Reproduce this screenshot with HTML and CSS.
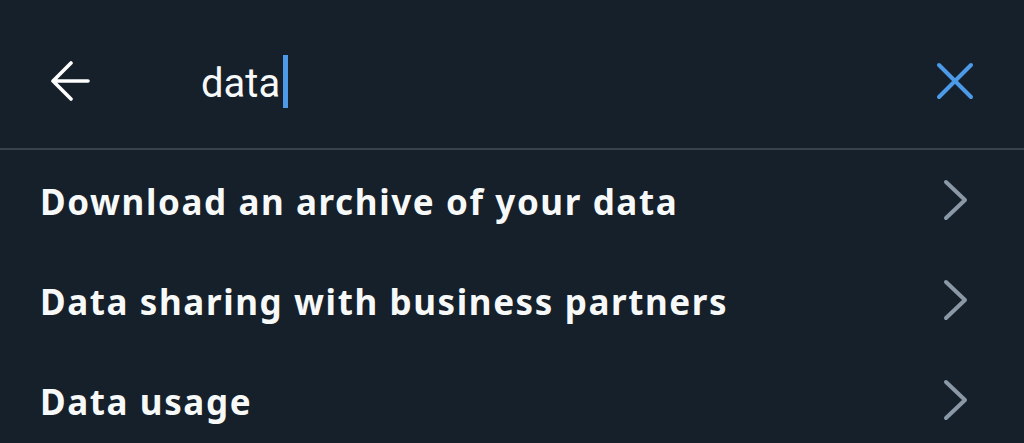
FILE: index.html
```html
<!DOCTYPE html>
<html lang="en">
<head>
    <meta charset="UTF-8">
    <meta name="viewport" content="width=device-width, initial-scale=1.0">
    <title>Search settings</title>
    <link rel="stylesheet" href="styles.css">
</head>
<body>
<div class="screen">
    <header class="search-bar">
        <button class="icon-btn back-btn" aria-label="Back">
            <svg viewBox="0 0 40 40" width="40" height="40">
                <path d="M38 20H3M21 2L3 20l18 18" fill="none" stroke="#fff" stroke-width="3.6" stroke-linecap="round" stroke-linejoin="round"/>
            </svg>
        </button>
        <div class="query">
            <span class="query-text">data</span><span class="caret"></span>
        </div>
        <button class="icon-btn clear-btn" aria-label="Clear">
            <svg viewBox="0 0 38 38" width="38" height="38">
                <path d="M3 3l32 32M35 3L3 35" fill="none" stroke="#4d9be8" stroke-width="4" stroke-linecap="round"/>
            </svg>
        </button>
    </header>

    <ul class="results">
        <li class="result">
            <span>Download an archive of your data</span>
            <svg class="chevron" viewBox="0 0 26 42" width="26" height="42">
                <path d="M3 3l19 18L3 39" fill="none" stroke="#8b98a5" stroke-width="4" stroke-linecap="round" stroke-linejoin="round"/>
            </svg>
        </li>
        <li class="result">
            <span>Data sharing with business partners</span>
            <svg class="chevron" viewBox="0 0 26 42" width="26" height="42">
                <path d="M3 3l19 18L3 39" fill="none" stroke="#8b98a5" stroke-width="4" stroke-linecap="round" stroke-linejoin="round"/>
            </svg>
        </li>
        <li class="result">
            <span>Data usage</span>
            <svg class="chevron" viewBox="0 0 26 42" width="26" height="42">
                <path d="M3 3l19 18L3 39" fill="none" stroke="#8b98a5" stroke-width="4" stroke-linecap="round" stroke-linejoin="round"/>
            </svg>
        </li>
    </ul>
</div>
</body>
</html>
```

FILE: styles.css
```css
body {
    margin: 0;
    padding: 0;
    background-color: #15202b;
    color: #f7f9f9;
    font-family: "Noto Sans", Roboto, sans-serif;
    overflow: hidden;
}
.screen {
    width: 1024px;
    height: 443px;
}
.search-bar {
    display: flex;
    align-items: center;
    height: 150px;
    padding: 14px 50px 0 50px;
    box-sizing: border-box;
    border-bottom: 2px solid #38444d;
}
.icon-btn {
    background: none;
    border: none;
    padding: 0;
    display: flex;
    cursor: pointer;
}
.query {
    flex: 1;
    display: flex;
    align-items: center;
    margin-left: 111px;
}
.query-text {
    font-family: Roboto, sans-serif;
    font-size: 40px;
    line-height: 1;
    padding-top: 6px;
    color: #f7f9f9;
}
.caret {
    width: 5px;
    height: 53px;
    background-color: #4d9be8;
    margin-left: 3px;
}
.results {
    list-style: none;
    margin: 0;
    padding: 0;
}
.result {
    display: flex;
    justify-content: space-between;
    align-items: center;
    height: 100px;
    padding: 0 55px 0 40px;
    font-size: 35px;
    font-weight: 700;
    letter-spacing: 1.6px;
}
.result span {
    padding-top: 3px;
}
```
